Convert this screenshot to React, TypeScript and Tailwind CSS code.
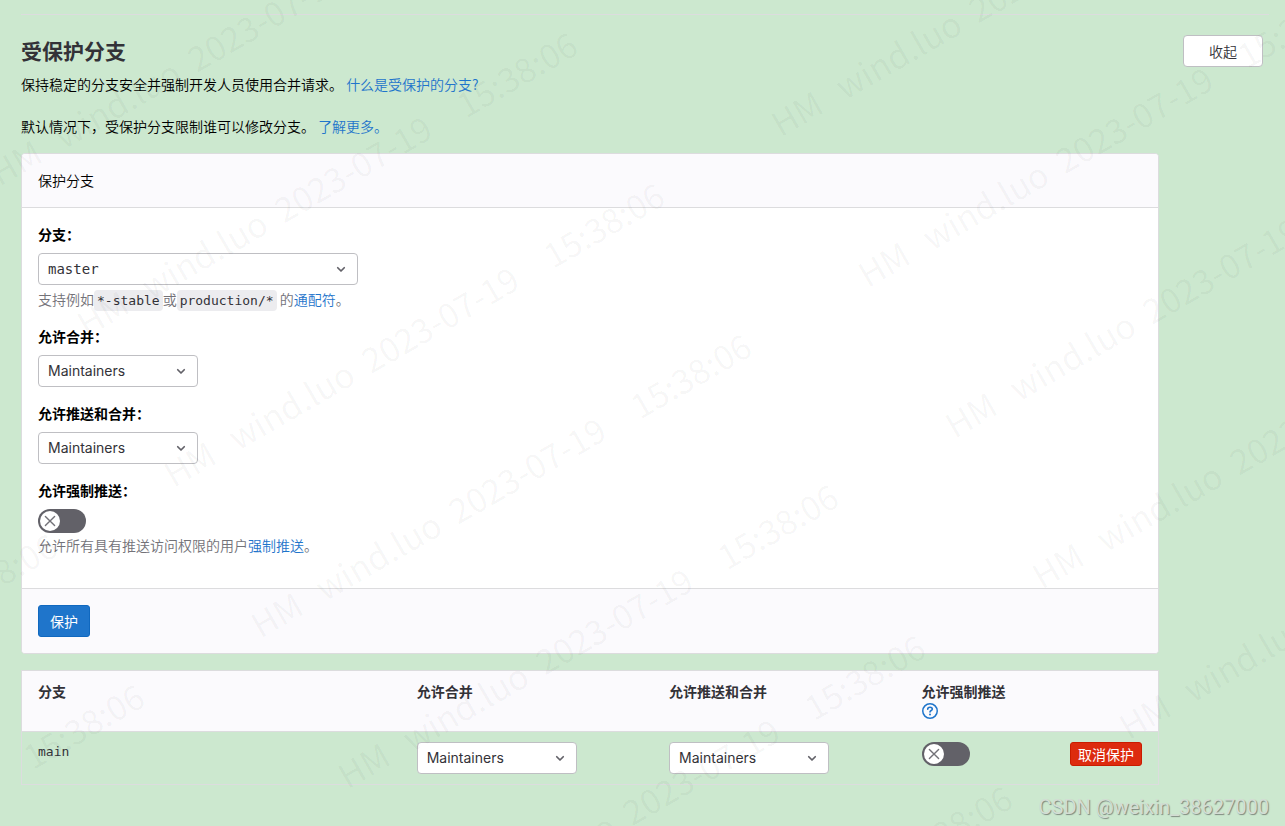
import { useState, type ReactNode } from "react";

const ROLES = ["Maintainers", "Developers + Maintainers", "No one"];

function Chevron() {
  return (
    <svg
      className="pointer-events-none absolute top-2 right-[9px] size-4 text-[#626168]"
      viewBox="0 0 16 16"
      fill="none"
      stroke="currentColor"
      strokeWidth="1.7"
      strokeLinecap="round"
      strokeLinejoin="round"
      aria-hidden="true"
    >
      <path d="M4.75 6.75 8 10l3.25-3.25" />
    </svg>
  );
}

type DropdownProps = {
  id: string;
  options: string[];
  label?: string;
  wide?: boolean;
  mono?: boolean;
};

function Dropdown({ id, options, label, wide, mono }: DropdownProps) {
  return (
    <div className={wide ? "relative w-80 max-w-full" : "relative w-40 max-w-full"}>
      <select
        id={id}
        aria-label={label}
        className={
          "block h-8 w-full appearance-none rounded border border-[#bfbfc3] bg-white pr-8 pl-[9px] text-sm font-normal text-[#333238] " +
          (mono ? "font-['DejaVu_Sans_Mono',monospace]" : "font-[Inter,'Noto_Sans_CJK_SC',sans-serif]")
        }
      >
        {options.map((option) => (
          <option key={option}>{option}</option>
        ))}
      </select>
      <Chevron />
    </div>
  );
}

function Toggle({ id, label }: { id: string; label?: string }) {
  const [on, setOn] = useState(false);
  return (
    <button
      id={id}
      type="button"
      role="switch"
      aria-checked={on}
      aria-label={label}
      onClick={() => setOn(!on)}
      className={
        on
          ? "flex h-6 w-12 items-center justify-end rounded-full bg-[#1f75cb] p-0.5"
          : "flex h-6 w-12 items-center justify-start rounded-full bg-[#626168] p-0.5"
      }
    >
      <span className="flex size-5 items-center justify-center rounded-full bg-white text-[#737278]">
        <svg
          className="size-4"
          viewBox="0 0 16 16"
          fill="none"
          stroke="currentColor"
          strokeWidth="1.4"
          strokeLinecap="round"
          strokeLinejoin="round"
          aria-hidden="true"
        >
          {on ? <path d="m3.5 8.5 3 3 6-7" /> : <path d="m3.4 3.4 9.2 9.2M12.6 3.4l-9.2 9.2" />}
        </svg>
      </span>
    </button>
  );
}

function Field({ id, label, children }: { id: string; label: string; children: ReactNode }) {
  return (
    <div className="mb-4">
      <label htmlFor={id} className="mb-2 block w-fit leading-[21px] font-bold text-black">
        {label}
      </label>
      {children}
    </div>
  );
}

function Code({ children }: { children: ReactNode }) {
  return (
    <code className="rounded bg-[#ececef] px-[3px] py-[3px] font-['DejaVu_Sans_Mono',monospace] text-[13px] leading-none text-[#333238]">
      {children}
    </code>
  );
}

function Watermark() {
  return (
    <div
      className="pointer-events-none absolute inset-0 overflow-hidden font-['Noto_Sans_CJK_SC',sans-serif] text-[34px] leading-[174px] font-normal text-black/4 select-none"
      aria-hidden="true"
    >
      <div className="absolute top-[450px] left-[-658px] grid origin-top-left -rotate-30 grid-cols-[701px_701px_701px]">
        {Array.from({ length: 24 }, (_, i) => (
          <div key={i} className="grid grid-cols-[74px_154px_210px_auto] whitespace-nowrap">
            <span>HM</span>
            <span>wind.luo</span>
            <span>2023-07-19</span>
            <span>15:38:06</span>
          </div>
        ))}
      </div>
    </div>
  );
}

export default function App() {
  return (
    <div className="relative min-h-screen overflow-hidden bg-[#cce8cf] pt-3.5 pr-4 pb-10 pl-[21px] font-['Noto_Sans_CJK_SC',sans-serif] text-sm leading-5 font-[350] text-black">
      <section className="border-t border-[#dcdcde] pt-5">
        <header className="mr-1.5 flex items-start justify-between">
          <div className="pt-[3px]">
            <h4 className="text-[21px] leading-6 font-bold text-[#333238]">受保护分支</h4>
            <p className="mt-3">
              保持稳定的分支安全并强制开发人员使用合并请求。{" "}
              <a href="#protected" className="text-[#1f75cb]">
                什么是受保护的分支?
              </a>
            </p>
          </div>
          <button
            type="button"
            className="h-8 w-20 shrink-0 rounded border border-[#bfbfc3] bg-white text-[#333238]"
          >
            收起
          </button>
        </header>

        <p className="mt-[22px]">
          默认情况下，受保护分支限制谁可以修改分支。{" "}
          <a href="#more" className="text-[#1f75cb]">
            了解更多。
          </a>
        </p>

        <div className="mr-[110px]">
          <form className="mt-[17px] overflow-hidden rounded border border-[#dcdcde] bg-white">
            <div className="border-b border-[#dcdcde] bg-[#fbfafd] p-4 leading-[21px]">保护分支</div>
            <div className="p-4">
              <Field id="branch" label="分支：">
                <Dropdown id="branch" options={["master", "main"]} wide mono />
                <p className="mt-1 leading-[21px] text-[#737278]">
                  支持例如<Code>*-stable</Code>或<Code>production/*</Code> 的
                  <a href="#wildcards" className="text-[#1f75cb]">
                    通配符
                  </a>
                  。
                </p>
              </Field>
              <Field id="merge" label="允许合并：">
                <Dropdown id="merge" options={ROLES} />
              </Field>
              <Field id="push" label="允许推送和合并：">
                <Dropdown id="push" options={ROLES} />
              </Field>
              <Field id="force" label="允许强制推送：">
                <Toggle id="force" />
                <p className="mt-0.5 leading-[21px] text-[#737278]">
                  允许所有具有推送访问权限的用户
                  <a href="#force-push" className="text-[#1f75cb]">
                    强制推送
                  </a>
                  。
                </p>
              </Field>
            </div>
            <div className="border-t border-[#dcdcde] bg-[#fbfafd] p-4">
              <button
                type="button"
                className="block h-8 rounded-[3px] border border-[#1068bf] bg-[#1f75cb] px-[11px] font-normal text-white"
              >
                保护
              </button>
            </div>
          </form>

          <div className="mt-4 border border-[#dcdcde]">
            <table className="w-full table-fixed border-separate border-spacing-0 text-left text-[#333238]">
              <colgroup>
                <col className="w-3/9" />
                <col className="w-2/9" />
                <col className="w-2/9" />
                <col className="w-1/9" />
                <col className="w-1/9" />
              </colgroup>
              <thead className="bg-[#fbfafd]">
                <tr className="align-top">
                  <th className="px-4 py-2.5 font-bold">分支</th>
                  <th className="px-4 py-2.5 font-bold">允许合并</th>
                  <th className="px-4 py-2.5 font-bold">允许推送和合并</th>
                  <th className="px-4 py-2.5 font-bold">
                    允许强制推送
                    <a href="#help" aria-label="帮助" className="flex h-5 items-center text-[#1f75cb]">
                      <svg className="size-4" viewBox="0 0 16 16" fill="none" stroke="currentColor" aria-hidden="true">
                        <circle cx="8" cy="8" r="7.25" strokeWidth="1.5" />
                        <path
                          d="M5.7 6.2C5.7 5 6.7 4.3 8 4.3s2.3.7 2.3 1.9C10.3 7.6 8 7.5 8 9"
                          strokeWidth="1.6"
                          strokeLinecap="round"
                        />
                        <circle cx="8" cy="11.6" r="1" fill="currentColor" stroke="none" />
                      </svg>
                    </a>
                  </th>
                  <td className="px-4 py-2.5" />
                </tr>
              </thead>
              <tbody>
                <tr className="align-top">
                  <td className="border-t border-[#dcdcde] px-4 py-2.5 font-['DejaVu_Sans_Mono',monospace] text-[13px] font-normal">
                    main
                  </td>
                  <td className="border-t border-[#dcdcde] px-4 py-2.5">
                    <Dropdown id="main-merge" label="允许合并" options={ROLES} />
                  </td>
                  <td className="border-t border-[#dcdcde] px-4 py-2.5">
                    <Dropdown id="main-push" label="允许推送和合并" options={ROLES} />
                  </td>
                  <td className="border-t border-[#dcdcde] px-4 py-2.5">
                    <Toggle id="main-force" label="允许强制推送" />
                  </td>
                  <td className="border-t border-[#dcdcde] px-4 py-2.5">
                    <button
                      type="button"
                      className="ml-auto flex h-6 items-center rounded-[3px] border border-[#c91c00] bg-[#dd2b0e] px-[7px] font-normal whitespace-nowrap text-white"
                    >
                      取消保护
                    </button>
                  </td>
                </tr>
              </tbody>
            </table>
          </div>
        </div>
      </section>

      <Watermark />
      <p className="absolute right-4 bottom-[7px] font-[Roboto,sans-serif] text-[20px] leading-6 font-normal text-[#d3ddd4] [text-shadow:1px_1px_1px_#7d887e]">
        CSDN @weixin_38627000
      </p>
    </div>
  );
}
